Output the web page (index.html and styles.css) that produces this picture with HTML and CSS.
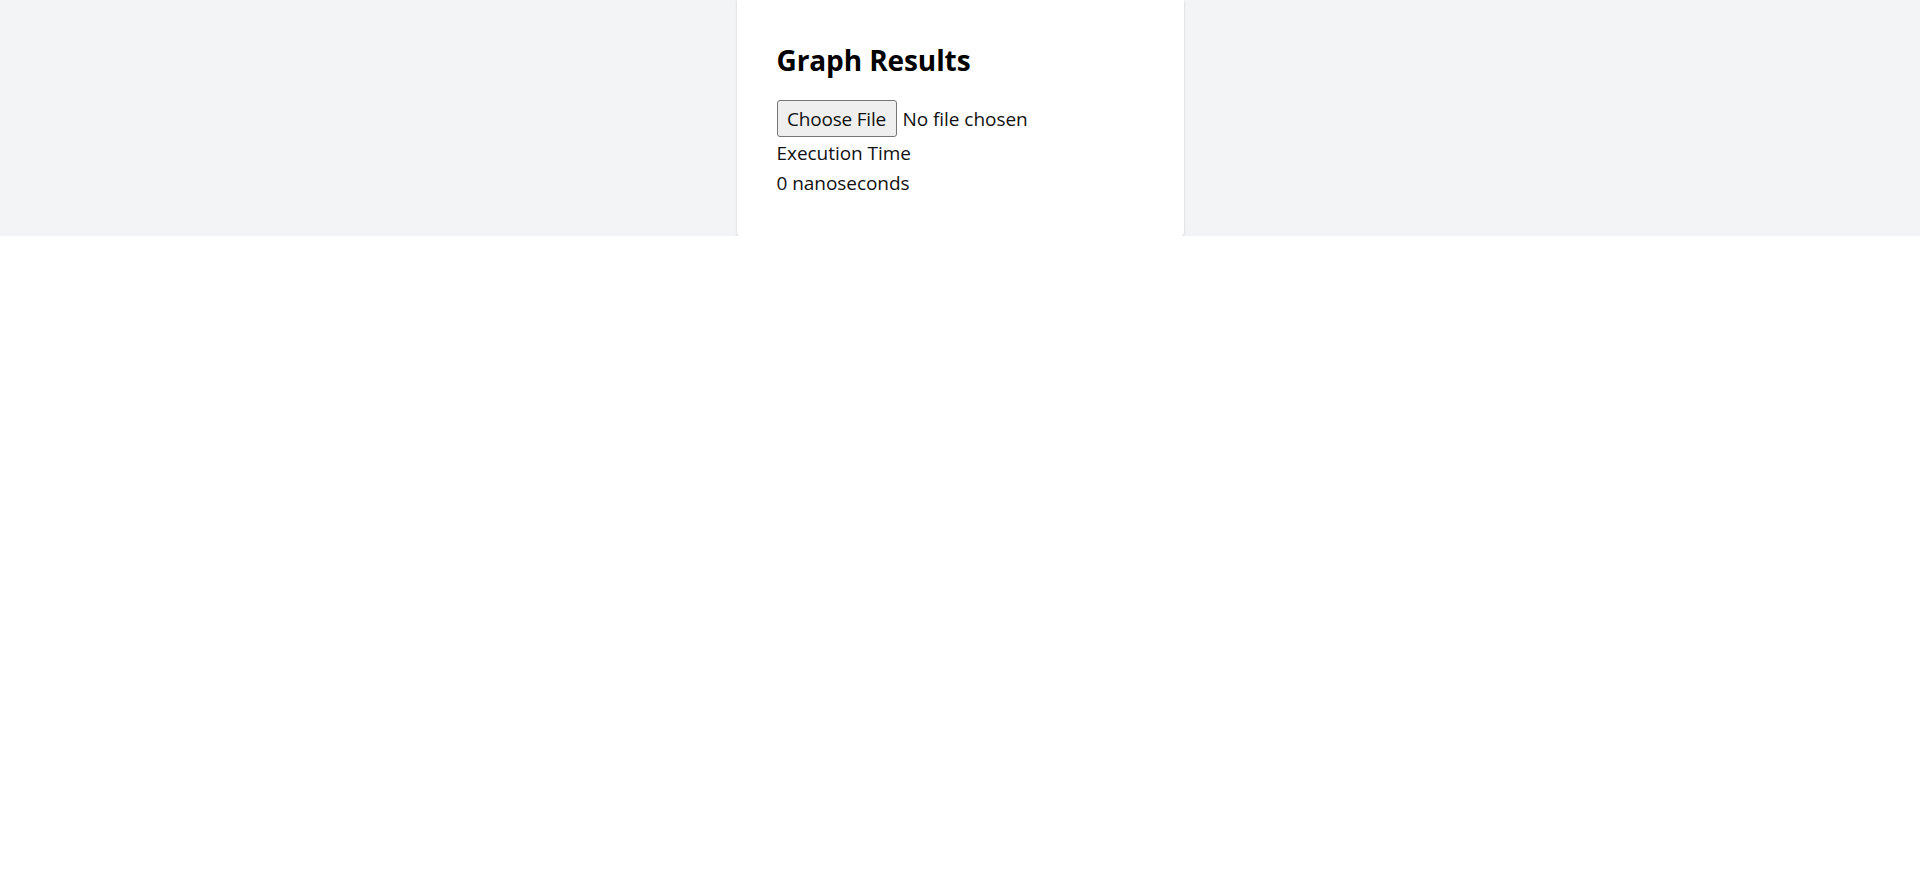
FILE: index.html
```html
<!DOCTYPE html>
<html lang="en">
<head>
<meta charset="utf-8">
<title>Graph Results</title>
<link rel="stylesheet" href="styles.css">
</head>
<body>
<div class="band">
  <div class="card">
    <h1 class="title">Graph Results</h1>
    <div class="file-row">
      <button class="file-btn" type="button">Choose File</button>
      <span class="file-name">No file chosen</span>
    </div>
    <div class="line">Execution Time</div>
    <div class="line">0 nanoseconds</div>
  </div>
</div>
</body>
</html>
```

FILE: styles.css
```css
html, body {
  margin: 0;
  padding: 0;
  background: #ffffff;
}
body {
  font-family: "Open Sans", "Noto Sans", "Liberation Sans", sans-serif;
  color: #111111;
  font-size: 20px;
  line-height: 30px;
}
.band {
  background: #f3f4f6;
  height: 236px;
  display: flex;
  justify-content: center;
  align-items: flex-start;
}
.card {
  width: 447px;
  box-sizing: border-box;
  height: 237px;
  padding: 40px;
  background: #ffffff;
  border-radius: 0 0 5px 5px;
  box-shadow: 0 1px 3px rgba(0,0,0,0.12), 0 1px 2px rgba(0,0,0,0.06);
  position: relative;
  z-index: 1;
}
.title {
  margin: 0 0 20px 0;
  font-size: 28px;
  line-height: 40px;
  font-weight: 700;
  color: #000000;
  letter-spacing: -0.1px;
}
.file-row {
  display: flex;
  align-items: center;
  height: 37px;
}
.file-btn {
  height: 37px;
  width: 120px;
  box-sizing: border-box;
  padding: 0 7px;
  border: 1px solid #767676;
  border-radius: 3px;
  background: #efefef;
  font-family: inherit;
  font-size: 19px;
  color: #111111;
  margin: 0 6px 0 0;
  letter-spacing: -0.2px;
}
.file-name {
  font-size: 19px;
  letter-spacing: -0.05px;
}
.line {
  height: 30px;
  padding-top: 1px;
  margin-bottom: -1px;
  font-size: 19px;
  letter-spacing: -0.05px;
}
```
